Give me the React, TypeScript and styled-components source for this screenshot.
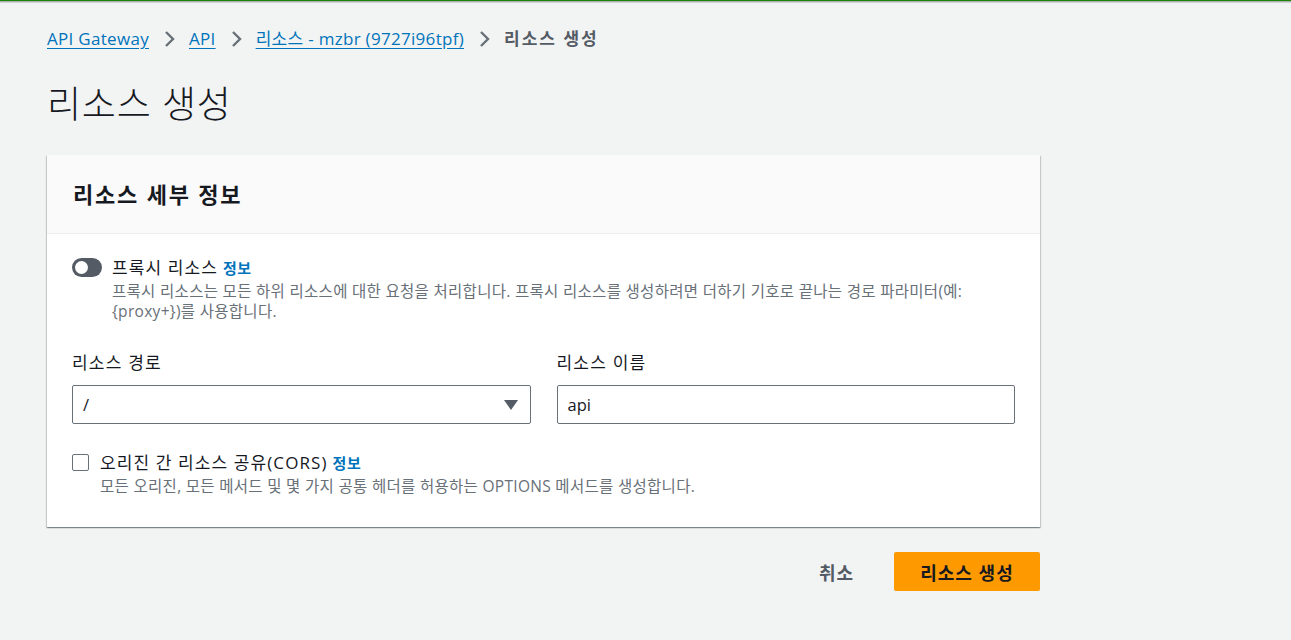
import styled, { createGlobalStyle } from "styled-components";

const GlobalStyle = createGlobalStyle`
  html, body {
    margin: 0;
    padding: 0;
    background: #f2f3f3;
  }
  body {
    font-family: "Open Sans", "Noto Sans CJK KR", sans-serif;
    color: #16191f;
    border-top: 1px solid #1d8102;
  }
`;

const TopShadow = styled.div`
  height: 2px;
  background: linear-gradient(#9aa0a6, #e1e4e4);
`;

const Page = styled.div`
  width: 993px;
  padding: 24px 0 0 47px;
`;

const Crumbs = styled.nav`
  display: flex;
  align-items: center;
  height: 24px;
  font-size: 17px;
  line-height: 24px;
  letter-spacing: 0.3px;
`;

const CrumbLink = styled.a`
  color: #0073bb;
  text-decoration: underline;
  text-underline-offset: 3px;
  cursor: pointer;
`;

const CrumbCurrent = styled.span`
  color: #545b64;
  font-weight: 700;
  letter-spacing: 2px;
`;

const Chevron = styled.span`
  display: inline-flex;
  width: 40px;
  justify-content: center;
  align-items: center;
`;

const Title = styled.h1`
  margin: 33px 0 0;
  font-size: 37px;
  line-height: 40px;
  font-weight: 300;
  letter-spacing: 0.8px;
  color: #16191f;
`;

const Card = styled.section`
  margin-top: 31px;
  background: #fff;
  box-shadow: 0 1px 1px 0 rgba(0, 28, 36, 0.3), 1px 1px 1px 0 rgba(0, 28, 36, 0.15),
    -1px 1px 1px 0 rgba(0, 28, 36, 0.15);
`;

const CardHeader = styled.header`
  height: 78px;
  display: flex;
  align-items: center;
  padding: 0 26px;
  background: #fafafa;
  border-bottom: 1px solid #eaeded;
`;

const CardTitle = styled.h2`
  margin: 0;
  font-size: 22px;
  font-weight: 700;
  line-height: 28px;
  letter-spacing: 1.8px;
`;

const CardBody = styled.div`
  padding: 24px 25px 31px;
  display: flex;
  flex-direction: column;
`;

const OptionRow = styled.div<{ $top?: number }>`
  display: flex;
  gap: 10px;
  margin-top: ${(p) => p.$top ?? 0}px;
`;

const Toggle = styled.span`
  flex: none;
  width: 30px;
  height: 19px;
  border-radius: 10px;
  background: #545b64;
  display: flex;
  align-items: center;
  padding-left: 3px;
  box-sizing: border-box;
  &::after {
    content: "";
    width: 13px;
    height: 13px;
    border-radius: 50%;
    background: #fff;
  }
`;

const Checkbox = styled.span`
  flex: none;
  width: 15px;
  height: 15px;
  margin: 1px 1px 0 0;
  border: 1px solid #687078;
  border-radius: 2px;
  background: #fff;
`;

const OptionText = styled.div`
  display: flex;
  flex-direction: column;
`;

const OptionLabel = styled.div`
  font-size: 17px;
  line-height: 20px;
  letter-spacing: 1.1px;
  color: #16191f;
`;

const Info = styled.a`
  margin-left: 5px;
  font-size: 15px;
  font-weight: 600;
  letter-spacing: 0.5px;
  color: #0073bb;
`;

const Description = styled.div`
  margin-top: 3px;
  font-size: 15.5px;
  line-height: 20px;
  letter-spacing: 0.3px;
  color: #687078;
  padding-right: 30px;
`;

const FieldGrid = styled.div`
  display: grid;
  grid-template-columns: 1fr 1fr;
  gap: 26px;
  margin-top: 30px;
`;

const Field = styled.div`
  display: flex;
  flex-direction: column;
`;

const FieldLabel = styled.label`
  font-size: 17px;
  line-height: 24px;
  letter-spacing: 1.2px;
  color: #16191f;
  margin-bottom: 10px;
`;

const InputBox = styled.div`
  height: 39px;
  box-sizing: border-box;
  border: 1px solid #687078;
  border-radius: 2px;
  display: flex;
  align-items: center;
  justify-content: space-between;
  padding: 0 12px 0 10px;
  font-size: 16.5px;
  color: #16191f;
`;

const Actions = styled.div`
  display: flex;
  justify-content: flex-end;
  align-items: center;
  gap: 40px;
  margin-top: 25px;
`;

const LinkButton = styled.button`
  border: none;
  background: none;
  font: inherit;
  font-size: 18px;
  font-weight: 700;
  letter-spacing: 1px;
  color: #545b64;
  padding: 0;
`;

const PrimaryButton = styled.button`
  width: 146px;
  height: 39px;
  border: none;
  border-radius: 2px;
  background: #ff9900;
  font: inherit;
  font-size: 18px;
  font-weight: 700;
  letter-spacing: 1px;
  color: #16191f;
`;

const ChevronIcon = () => (
  <svg width="12" height="18" viewBox="0 0 12 18">
    <path d="M3 2l7 7-7 7" fill="none" stroke="#687078" strokeWidth="2.4" />
  </svg>
);

const Caret = () => (
  <svg width="14" height="10" viewBox="0 0 14 10">
    <path d="M0 0h14L7 10z" fill="#545b64" />
  </svg>
);

export default function App() {
  return (
    <>
      <GlobalStyle />
      <TopShadow />
      <Page>
        <Crumbs>
          <CrumbLink>API Gateway</CrumbLink>
          <Chevron>
            <ChevronIcon />
          </Chevron>
          <CrumbLink>API</CrumbLink>
          <Chevron>
            <ChevronIcon />
          </Chevron>
          <CrumbLink>리소스 - mzbr (9727i96tpf)</CrumbLink>
          <Chevron>
            <ChevronIcon />
          </Chevron>
          <CrumbCurrent>리소스 생성</CrumbCurrent>
        </Crumbs>
        <Title>리소스 생성</Title>
        <Card>
          <CardHeader>
            <CardTitle>리소스 세부 정보</CardTitle>
          </CardHeader>
          <CardBody>
            <OptionRow>
              <Toggle />
              <OptionText>
                <OptionLabel>
                  프록시 리소스<Info>정보</Info>
                </OptionLabel>
                <Description>
                  프록시 리소스는 모든 하위 리소스에 대한 요청을 처리합니다. 프록시 리소스를 생성하려면 더하기 기호로
                  끝나는 경로 파라미터(예: {"{proxy+}"})를 사용합니다.
                </Description>
              </OptionText>
            </OptionRow>
            <FieldGrid>
              <Field>
                <FieldLabel>리소스 경로</FieldLabel>
                <InputBox>
                  <span>/</span>
                  <Caret />
                </InputBox>
              </Field>
              <Field>
                <FieldLabel>리소스 이름</FieldLabel>
                <InputBox>
                  <span>api</span>
                </InputBox>
              </Field>
            </FieldGrid>
            <OptionRow $top={29}>
              <Checkbox />
              <OptionText>
                <OptionLabel>
                  오리진 간 리소스 공유(CORS)<Info>정보</Info>
                </OptionLabel>
                <Description>모든 오리진, 모든 메서드 및 몇 가지 공통 헤더를 허용하는 OPTIONS 메서드를 생성합니다.</Description>
              </OptionText>
            </OptionRow>
          </CardBody>
        </Card>
        <Actions>
          <LinkButton>취소</LinkButton>
          <PrimaryButton>리소스 생성</PrimaryButton>
        </Actions>
      </Page>
    </>
  );
}
